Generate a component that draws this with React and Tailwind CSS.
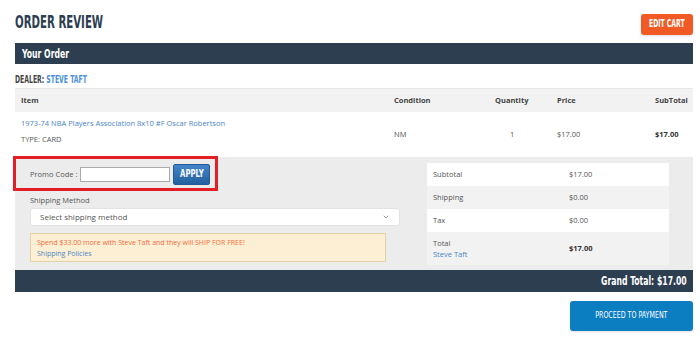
import { ChevronDown } from "lucide-react";

const cond = "font-['DejaVu_Sans_Condensed','DejaVu_Sans',sans-serif]";

function SummaryRow({ label, sub, value, bold, shaded, tall }) {
  return (
    <div
      className={`flex ${tall ? "h-[33px]" : "h-[23px]"} items-center ${shaded ? "bg-[#f2f2f2]" : "bg-white"}`}
    >
      <div className="w-[142px] pl-[6px] leading-[11px]">
        <div>{label}</div>
        {sub && <div className="text-[#4a86c5]">{sub}</div>}
      </div>
      <div className={bold ? "font-bold text-[#333]" : ""}>{value}</div>
    </div>
  );
}

export default function App() {
  return (
    <div className="w-[700px] h-[337px] bg-white pl-[15px] pr-[7px] font-['Open_Sans',sans-serif] text-[7.5px] text-[#555] overflow-hidden">
      {/* Title */}
      <div className="flex justify-between items-start pt-[14px] h-[43px]">
        <h1 className={`${cond} inline-block whitespace-nowrap text-[18px] leading-[18px] text-[#2c3e50] font-bold scale-x-[0.63] origin-left mt-[-1px]`}>
          ORDER REVIEW
        </h1>
        <button className="h-[21px] w-[52px] rounded-[3px] bg-[#f15a24] text-white shadow-sm flex items-center justify-center">
          <span className={`${cond} inline-block whitespace-nowrap text-[11px] font-bold scale-x-[0.62]`}>EDIT CART</span>
        </button>
      </div>

      {/* Your order bar */}
      <div className="h-[21px] bg-[#2d3e50] text-white pl-[7px] flex items-center">
        <span className={`${cond} inline-block whitespace-nowrap text-[13px] font-bold scale-x-[0.66] origin-left`}>Your Order</span>
      </div>

      <div className="h-[25px] pt-[11px] border-b border-[#e6e6e6]">
        <span className={`${cond} inline-block whitespace-nowrap text-[10px] leading-[10px] font-bold text-[#444] scale-x-[0.68] origin-left`}>
          DEALER: <span className="text-[#4a90d9]">STEVE TAFT</span>
        </span>
      </div>

      {/* Items table */}
      <div className="grid grid-cols-[373px_101px_62px_98px_1fr] bg-[#f2f2f2] h-[23px] items-center font-bold text-[#444]">
        <div className="pl-[6px]">Item</div>
        <div className="pl-[6px]">Condition</div>
        <div className="pl-[6px]">Quantity</div>
        <div className="pl-[6px]">Price</div>
        <div className="pl-[6px]">SubTotal</div>
      </div>
      <div className="grid grid-cols-[373px_101px_62px_98px_1fr] h-[45px] items-center">
        <div className="pl-[6px] pb-[7px] flex flex-col gap-[5px] leading-[11px]">
          <span className="text-[#4a86c5]">1973-74 NBA Players Association 8x10 #F Oscar Robertson</span>
          <span>TYPE: CARD</span>
        </div>
        <div className="pl-[6px]">NM</div>
        <div className="pl-[21px]">1</div>
        <div className="pl-[6px]">$17.00</div>
        <div className="pl-[6px] font-bold text-[#333]">$17.00</div>
      </div>

      {/* Cart options */}
      <div className="bg-[#ececec] h-[113px] flex">
        <div className="w-[412px] flex flex-col">
          <div className="relative h-[34px] flex items-center pl-[15px] pt-[1px]">
            <div className="absolute left-[-2px] top-[-1px] w-[205px] h-[35px] border-[3px] border-[#e31e25]" />
            <span className="mr-[3px]">Promo Code :</span>
            <input className="w-[90px] h-[15px] bg-white border border-[#aaa] outline-none" />
            <button className="ml-[3px] h-[21px] w-[37px] rounded-[2px] border border-[#1f5a96] bg-gradient-to-b from-[#4285c9] to-[#235f9e] text-white flex items-center justify-center">
              <span className={`${cond} inline-block text-[11px] font-bold scale-x-[0.7]`}>APPLY</span>
            </button>
          </div>
          <div className="pl-[15px] pt-[4px] leading-[11px]">Shipping Method</div>
          <div className="ml-[15px] mt-[2px] w-[370px] h-[18px] bg-white rounded-[3px] border border-[#e2e2e2] flex items-center justify-between px-[9px] text-[8px]">
            <span>Select shipping method</span>
            <ChevronDown size={8} strokeWidth={2} className="text-[#777]" />
          </div>
          <div className="ml-[15px] mt-[7px] w-[356px] h-[29px] bg-[#fdefd4] border border-[#e2d2a6] pl-[6px] pt-[3px] leading-[11px] text-[7px]">
            <div className="text-[#f26d3d]">Spend $33.00 more with Steve Taft and they will SHIP FOR FREE!</div>
            <div className="text-[#4a86c5]">Shipping Policies</div>
          </div>
        </div>
        <div className="pt-[6px]">
          <div className="w-[242px]">
            <SummaryRow label="Subtotal" value="$17.00" />
            <SummaryRow label="Shipping" value="$0.00" shaded />
            <SummaryRow label="Tax" value="$0.00" />
            <SummaryRow label="Total" sub="Steve Taft" value="$17.00" bold shaded tall />
          </div>
        </div>
      </div>

      {/* Grand total */}
      <div className="h-[22px] bg-[#2d3e50] text-white flex items-center justify-end pr-[6px]">
        <span className={`${cond} inline-block whitespace-nowrap text-[13px] font-bold scale-x-[0.66] origin-right`}>Grand Total: $17.00</span>
      </div>

      <div className="flex justify-end pt-[9px]">
        <button className="w-[123px] h-[30px] rounded-[3px] bg-[#0b7dc1] text-white shadow-sm flex items-center justify-center">
          <span className={`${cond} inline-block whitespace-nowrap text-[9px] scale-x-[0.78]`}>PROCEED TO PAYMENT</span>
        </button>
      </div>
    </div>
  );
}
